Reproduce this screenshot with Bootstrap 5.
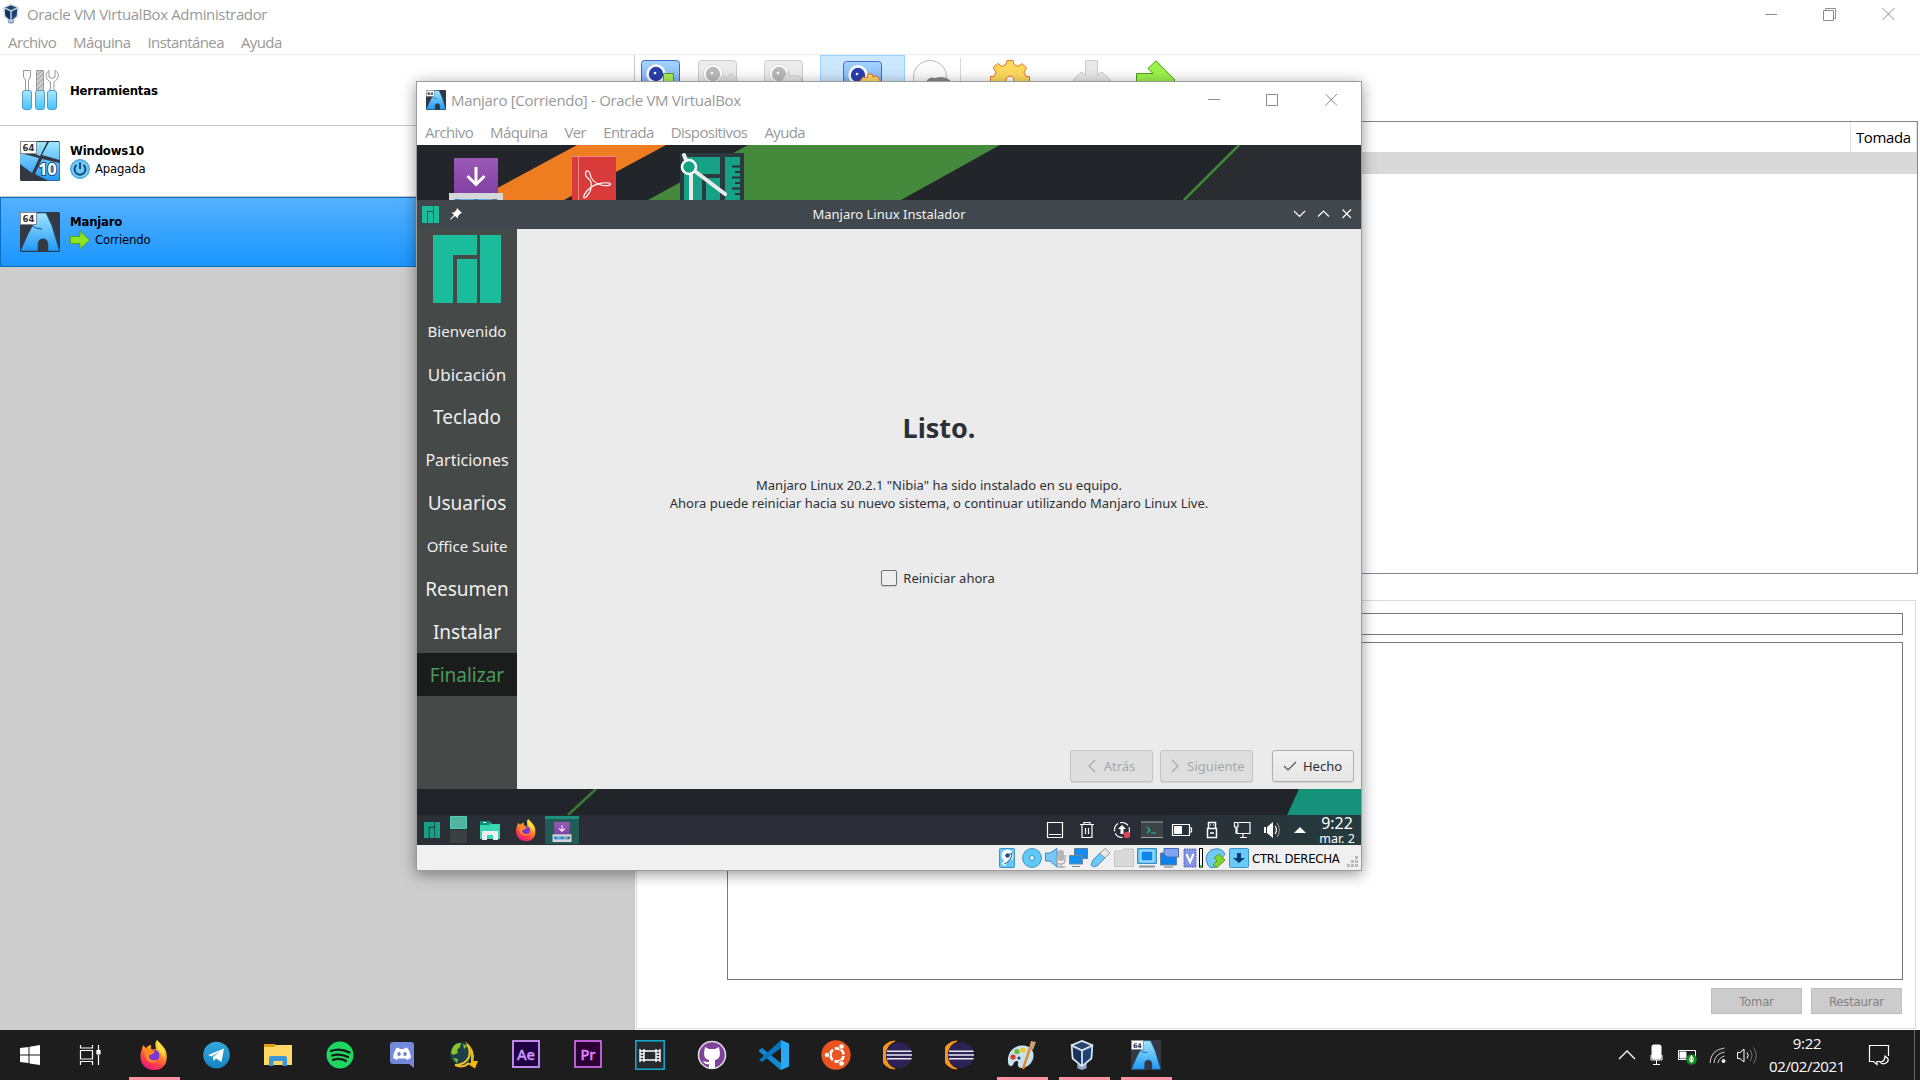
<!DOCTYPE html>
<html lang="es">
<head>
<meta charset="utf-8">
<title>Oracle VM VirtualBox Administrador</title>
<link href="https://cdn.jsdelivr.net/npm/bootstrap@5.3.0/dist/css/bootstrap.min.css" rel="stylesheet">
<style>
html,body{width:1920px;height:1080px;overflow:hidden}
body{font-family:"Open Sans","Noto Sans",sans-serif;font-size:15px;line-height:20px;color:#000;background:#fff}
svg{display:block;flex:none;overflow:visible}
.desk{width:1920px;height:1080px}
.fade-t{color:#999}
.ttl{height:30px;padding:0 0 2px 2px}
.ttl .cap{margin-left:7px;letter-spacing:-.36px}
.mnu{height:24px;padding-left:8px;gap:17px;letter-spacing:-.6px}
.mainrow{border-top:1px solid #ededed;height:976px}
.leftp{width:635px;background:#cdcdcd;border-right:1px solid #c4c4c4}
.tah{font-family:"DejaVu Sans Condensed","DejaVu Sans",sans-serif;font-stretch:condensed;font-size:13px;line-height:18px;letter-spacing:-.2px}
.entry{height:71px;padding-left:20px;gap:10px;background:#fff;border-bottom:1px solid #c8c8c8}
.entry.cur{height:70px;background:linear-gradient(#55b1ff,#1a96ff);border:1px solid #0a6fc4;padding:0 0 1px 19px}
.state{height:18px;margin-bottom:2px;gap:5px}
.tools{height:66px}
.hot{width:85px;height:66px;background:#cce8ff;border:1px solid #99d1ff;padding:5px 0 0 22px}
.snap{margin-right:2px;height:453px;border:1px solid #828790}
.snap .hd{height:30px}
.snap .tom{border-left:1px solid #e3e3e3;border-right:1px solid #e3e3e3;width:67px;padding-left:5px;letter-spacing:-.4px;line-height:31px}
.snap .sel{height:22px;background:#d9d9d9}
.det{margin:26px 4px 0 1px;height:429px;border:1px solid #dadada;padding:12px 12px 0 90px}
.fld{height:22px;border:1px solid #7a7a7a}
.area{height:338px;margin-top:7px;border:1px solid #7a7a7a}
.wbtn{width:91px;height:26px;background:#ccc;border:1px solid #bfbfbf;color:#838383;text-align:center;line-height:25px}
.vm{position:absolute;left:416px;top:81px;width:946px;height:790px;border:1px solid #9c9c9c;background:#fff;box-shadow:0 3px 14px rgba(0,0,0,.42)}
.noto{font-family:"Noto Sans",sans-serif}
.vmt{height:37px;padding:0 0 1px 9px}
.vmt .cap{margin-left:5px;letter-spacing:-.31px}
.vmm{height:26px;padding:0 0 1px 8px;gap:17px;letter-spacing:-.6px}
.inst{height:29px;background:#40474d;color:#f2f2f2;font-size:13px;padding-bottom:1px}
.side{width:100px;background:#454948;padding-top:6px;color:#efefef}
.step{height:43px;line-height:43px;text-align:center;white-space:nowrap}
.s1{font-size:15px;line-height:45px}.s2{font-size:17px;line-height:45px}.s2n{font-size:16px;line-height:45px}.s3{font-size:19px;line-height:44px}
.step.on{background:#1b1d1c;color:#4b9a5c}
.pane{background:#ebebeb;color:#2b3036;font-size:13px;line-height:18px}
.done{font-size:27px;line-height:36px;font-weight:700;margin-top:181px}
.box{width:16px;height:16px;border:1px solid #6f7376;border-radius:2px;background:#eee;box-shadow:0 1px 1px #ccc}
.kbtn{height:32px;border:1px solid #c5c5c5;border-radius:3px;background:#dedede;color:#a6a8a9;box-shadow:0 1px 1px #d0d0d0}
.kbtn.go{border-color:#afafaf;background:linear-gradient(#f0f0f0,#e6e6e6);color:#2b3036}
.gbar{height:30px;background:linear-gradient(90deg,#292f35,#2a2d37 20%,#2a2d36 75%,#263b3e)}
.task{width:34px;height:28px;background:#235b57;border-top:3px solid #1e8f7d}
.gclock{width:46px;height:30px;font-size:12.500px;line-height:13px;margin-left:3px}
.gclock div{font-size:16px;line-height:17px}
.stat{height:25px;background:#f0f0f0}
.tb{height:50px;background:#1d1d1d;color:#fff}
.ap{width:62px;height:50px;padding:0 5px}
.ap.run{border-bottom:3px solid #ff94a0;margin:0 5.5px;width:51px;padding:3px 0 0}
</style>
<script src="https://cdn.jsdelivr.net/npm/bootstrap@5.3.0/dist/js/bootstrap.bundle.min.js"></script>
</head>
<body>
<svg width="0" height="0" class="position-absolute">
<defs>
<linearGradient id="gb" x2="0" y2="1"><stop stop-color="#9fe6ff"/><stop offset="1" stop-color="#2299f5"/></linearGradient>
<linearGradient id="gc" x2="0" y2="1"><stop stop-color="#b4e4ff"/><stop offset="1" stop-color="#43c4fb"/></linearGradient>
<linearGradient id="gcam" x2="0" y2="1"><stop stop-color="#a4d4ff"/><stop offset="1" stop-color="#6c9df0"/></linearGradient>
<linearGradient id="gff" x1=".8" y1="0" x2=".3" y2="1"><stop stop-color="#fff04d"/><stop offset=".4" stop-color="#ff9a26"/><stop offset=".75" stop-color="#ff3d49"/><stop offset="1" stop-color="#e8148a"/></linearGradient>
<linearGradient id="gpu" x2="0" y2="1"><stop stop-color="#9b59b6"/><stop offset="1" stop-color="#8140a4"/></linearGradient>
<linearGradient id="gtg" x2="0" y2="1"><stop stop-color="#35a9e0"/><stop offset="1" stop-color="#1583c0"/></linearGradient>
<symbol id="vbox" viewBox="0 0 26 32"><path d="M13 0 25 5 24 20 18 25V30L13 32 8 30V25L2 20 1 5Z" fill="#8fa6c6"/><path d="M13 2 23 6 13 10 3 6Z" fill="#24466f"/><path d="M3 8 12 12V26L4 19Z" fill="#14335c"/><path d="M23 8 14 12V26L22 19Z" fill="#1d4273"/><path d="M13 1 24 5.500 13 11 2 5.500ZM13 11V28M2 6 3 20 13 28 23 20 24 6" fill="none" stroke="#e7eff8" stroke-width="1.300"/></symbol>
<symbol id="arch" viewBox="0 0 40 40"><rect width="40" height="40" rx="1.500" fill="#343843"/><path d="M17 1H26L32 14 39.500 39H28V32C28 25 18 25 18 32V39H.5L8 22 14 11Z" fill="url(#gb)" stroke="#1a4e83" stroke-width=".6"/><path d="M11 13Q15 17 22 17" stroke="#1a4e83" fill="none"/><rect x=".5" y=".5" width="16" height="12" fill="#fff" stroke="#888"/><text x="8.500" y="10" text-anchor="middle" font-family="DejaVu Sans" font-weight="700" font-size="8.500" fill="#333">64</text></symbol>
<symbol id="mj" viewBox="0 0 68 68"><path d="M0 0H44V20H20V68H0ZM24 24H44V68H24ZM47 0H68V68H47Z"/></symbol>
<symbol id="ff" viewBox="0 0 28 30"><path d="M17 0C20 3 23 6 25 9 28 14 29 30 14 30 2 30-1 19 1 12L3 5 6 8C8 6 9 5 11 5L11 9C14 10 15 9 16 9 15 5 15 2 17 0Z" fill="url(#gff)"/><circle cx="13.500" cy="15.500" r="6" fill="#7a35d8"/><path d="M5 9C8 7 11 8 15 12 12 14 12 15 9 15 8 20 14 22 18 19 14 26 3 23 5 9Z" fill="#ff8a22"/><path d="M18 2C21 7 26 10 25 19 24 14 19 12 17 8Z" fill="#fff04d" opacity=".7"/></symbol>
<symbol id="inst" viewBox="0 0 54 57"><path d="M5 0H49V36H5Z" fill="url(#gpu)"/><path d="M27 9V26M18.500 18 27 26.500 35.500 18" fill="none" stroke="#fff" stroke-width="3"/><path d="M0 35H54V57H0Z" fill="#d4d6d8"/><rect x="4" y="41" width="46" height="9" rx="4" fill="#69a9d5"/><circle cx="8" cy="45" r="4" fill="#1d86db"/><circle cx="27" cy="45" r="4" fill="#1d86db"/><circle cx="46" cy="45" r="4" fill="#666"/></symbol>
<symbol id="camb" viewBox="0 0 40 34"><rect x=".5" y=".5" width="38" height="38" rx="3" fill="url(#gcam)" stroke="#4668cf"/><circle cx="15" cy="14" r="9.700" fill="#fff"/><circle cx="15" cy="14" r="7.200" fill="#2b3fae"/><circle cx="14" cy="13" r="1.300" fill="#fff"/></symbol>
<symbol id="camg" viewBox="0 0 40 34"><rect x=".5" y=".5" width="38" height="38" rx="3" fill="#ececec" stroke="#ccc"/><circle cx="15" cy="14" r="9.700" fill="#fff" stroke="#ddd"/><circle cx="15" cy="14" r="7.200" fill="#bbb"/><circle cx="14" cy="13" r="1.300" fill="#fff"/></symbol>
<symbol id="ecl" viewBox="0 0 30 30"><path d="M12 1A14 14 0 0 0 12 29 15 15 0 0 1 12 1Z" fill="#f7941e" stroke="#f7941e"/><circle cx="16" cy="15" r="13" fill="#2c2255"/><path d="M4 11.300H28.500M3.500 15H29M4 18.700H28.500" stroke="#e9e7f2" stroke-width="1.600"/></symbol>
</defs></svg>

<div class="desk d-flex flex-column">
  <div class="ttl d-flex align-items-center fade-t">
    <svg width="18" height="20"><use href="#vbox"/></svg>
    <span class="cap">Oracle VM VirtualBox Administrador</span>
    <svg class="ms-auto" style="margin-right:25px" width="130" height="14" fill="none" stroke="#8c8c8c"><path d="M0 7.500H12M58.500 3.500H68.500V13.500H58.500ZM60.500 3V1.500H70.500V11.500H69M117.500 1 129.500 13M129.500 1 117.500 13"/></svg>
  </div>
  <div class="mnu d-flex align-items-center fade-t"><span>Archivo</span><span>Máquina</span><span>Instantánea</span><span>Ayuda</span></div>
  <div class="mainrow d-flex">
    <div class="leftp flex-shrink-0">
      <div class="entry d-flex align-items-center">
        <svg width="40" height="40" viewBox="0 0 40 40"><g fill="#fff" stroke="#999"><path d="M3.500.5H10.500V7L8.500 10V21H5.500V10L3.500 7Z"/><path d="M16.500.5H23.500V21H16.500Z" fill="#ccc"/><path d="M29 .5V7L32 8.500 35 7V.5C40 3 39 9 34 12V21H30.500V12C25 9 25 3 29 .5Z"/></g><path d="M17 5 22 1M17 10 23 4M17 15 23 9M17 20 23 14" stroke="#888" stroke-width=".7"/><g fill="url(#gc)" stroke="#4b9ccc"><rect x="2.500" y="20.500" width="9" height="19" rx="2.500"/><rect x="15.500" y="20.500" width="9" height="19" rx="2.500"/><rect x="27.500" y="20.500" width="9" height="19" rx="2.500"/></g></svg>
        <b class="tah" style="padding-top:2px">Herramientas</b>
      </div>
      <div class="entry d-flex align-items-center">
        <svg width="40" height="40" viewBox="0 0 40 40"><rect width="40" height="40" rx="1.500" fill="#343843"/><path d="M14 1H27L20 15 10 11ZM29 1H39.500V19L22 14ZM0 12 19 17 12 32 0 23ZM22 18 39.500 22V39.500H28L15 33Z" fill="url(#gb)"/><rect x=".5" y=".5" width="16" height="12" fill="#fff" stroke="#888"/><text x="8.500" y="10" text-anchor="middle" font-family="DejaVu Sans" font-weight="700" font-size="8.500" fill="#333">64</text><text x="27.500" y="34" text-anchor="middle" font-family="Noto Sans" font-weight="700" font-size="16" fill="#fff" stroke="#234a80" stroke-width="2" paint-order="stroke">10</text></svg>
        <div class="tah"><b>Windows10</b><div class="state d-flex align-items-center"><svg width="20" height="20"><circle cx="10" cy="10" r="9.400" fill="#6cc9fb" stroke="#3b8fca"/><path d="M6.500 6A5.500 5.500 0 1 0 13.500 6M10 3.500V10" fill="none" stroke="#123f6d" stroke-width="1.800"/></svg>Apagada</div></div>
      </div>
      <div class="entry cur d-flex align-items-center">
        <svg width="40" height="40"><use href="#arch"/></svg>
        <div class="tah"><b>Manjaro</b><div class="state d-flex align-items-center"><svg width="20" height="20"><path d="M.5 6.500H10V1L19.500 10 10 19V13.500H.5Z" fill="#8de723" stroke="#57a022"/></svg>Corriendo</div></div>
      </div>
    </div>
    <div class="flex-grow-1 d-flex flex-column">
      <div class="tools d-flex align-items-start">
        <svg width="40" height="34" style="margin:5px 0 0 6px"><use href="#camb"/><path d="M22.500 13.500H32.500V34H22.500Z" fill="#a6ef5b" stroke="#4ca01e"/></svg>
        <svg width="40" height="34" style="margin:5px 0 0 17px"><use href="#camg"/><path d="M19 23 25 15 29 18 33 13 39 19V30H19Z" fill="#e4e4e4" stroke="#ccc"/></svg>
        <svg width="40" height="34" style="margin:5px 0 0 26px"><use href="#camg"/><path d="M18 20 25 11V16H35L38 20V30H18Z" fill="#e8e8e8" stroke="#ccc"/></svg>
        <div class="hot" style="margin-left:16px"><svg width="40" height="34"><use href="#camb"/><path d="M16 21 20 16 24 17 25 13H29L30 16 34 15 37 19V34H16Z" fill="#ffd965" stroke="#ee6b2f"/></svg></div>
        <svg width="40" height="40" style="margin:5px 0 0 8px"><circle cx="17" cy="17" r="16.500" fill="#fcfcfc" stroke="#bbb"/><path d="M13 22Q16 16 22 18 30 15 37 20V30H13Z" fill="#888"/></svg>
        <svg width="1" height="40" style="margin:3px 0 0 7px"><path d="M.5 0V40" stroke="#d8d8d8"/></svg>
        <svg width="40" height="40" style="margin:5px 0 0 29px"><path d="M.5 16.500H4L6 12 3 8 8 3.500 12 6.500 16 4.500 17 .5H23L24 4.500 28 6.500 32 3.500 36.500 8 34 12 36 16.500H39.500V24H.5ZM20 16A4 4 0 1 0 20.100 16Z" fill="#ffd95d" stroke="#ea722a" fill-rule="evenodd"/></svg>
        <svg width="40" height="40" style="margin:5px 0 0 42px"><path d="M13.500.5H25.500V15L30 12 38.500 20 20 38 1 20 9 12 13.500 15Z" fill="#e8e8e8" stroke="#ccc"/></svg>
        <svg width="40" height="40" style="margin:5px 0 0 24px"><path d="M.5 13.500H17L12 8.500 20 .8 39 20 20 39 12 31H.5Z" fill="#9cf34a" stroke="#4f9a17"/></svg>
      </div>
      <div class="snap"><div class="hd d-flex justify-content-end"><div class="tom">Tomada</div></div><div class="sel"></div></div>
      <div class="det"><div class="fld"></div><div class="area"></div>
        <div class="d-flex justify-content-end mt-2 tah" style="gap:9px;margin-right:1px"><div class="wbtn">Tomar</div><div class="wbtn">Restaurar</div></div>
      </div>
    </div>
  </div>

  <div class="tb d-flex align-items-center">
    <div class="ap d-flex align-items-center justify-content-center" style="width:60px"><svg width="20" height="20" fill="#fff"><path d="M0 3 8.500 2V9.500H0ZM9.500 1.800 20 0V9.500H9.500ZM0 10.500H8.500V18L0 17ZM9.500 10.500H20V20L9.500 18.500Z"/></svg></div>
    <div class="ap d-flex align-items-center" style="width:63px;padding-left:20px"><svg width="20" height="20" fill="none" stroke="#fff" stroke-width="1.200"><path d="M.5 0V3H12.500V0M.5 20V16.500H12.500V20M.5 5.500H12.500V14H.5ZM18.500 0V5M18.500 10V20"/><path d="M17 5.500H20V9H17Z" fill="#fff"/></svg></div>
    <div class="ap run d-flex align-items-center justify-content-center"><svg width="28" height="30"><use href="#ff"/></svg></div>
    <div class="ap d-flex align-items-center justify-content-center"><svg width="27" height="28"><circle cx="13.500" cy="14" r="13.300" fill="url(#gtg)"/><path d="M5 14 21 7.500 18.500 21 13 17.500 10.500 20 10 16 17 10.500 8.500 15.500Z" fill="#fff"/></svg></div>
    <div class="ap d-flex align-items-center justify-content-center"><svg width="28" height="24"><path d="M0 1H11L13 3V6H0Z" fill="#e09b0e"/><path d="M0 4H10L12 2H28V22H0Z" fill="#ffd767"/><path d="M5 23V15Q5 13 7 13H21Q23 13 23 15V23H18.500V18H9.500V23Z" fill="#3c96d9"/></svg></div>
    <div class="ap d-flex align-items-center justify-content-center"><svg width="28" height="28"><circle cx="14" cy="14" r="13.500" fill="#1ed760"/><path d="M5 10Q14 6.500 23.500 11.500M6 14.500Q14 12 22 16M7 18.800Q14 16.500 20 20" fill="none" stroke="#191919" stroke-width="2.300" stroke-linecap="round"/></svg></div>
    <div class="ap d-flex align-items-center justify-content-center"><svg width="24" height="26"><path d="M3 0H21Q24 0 24 3V26L19 22H3Q0 22 0 19V3Q0 0 3 0Z" fill="#7289da"/><path d="M8 5.500 6 6.500Q3 11 3 16L7 18 8 16.500H16L17 18 21 16Q21 11 18 6.500L15 5.500 14 7H10Z" fill="#fff"/><ellipse cx="9" cy="12" rx="1.700" ry="2" fill="#6b80cb"/><ellipse cx="15" cy="12" rx="1.700" ry="2" fill="#6b80cb"/></svg></div>
    <div class="ap d-flex align-items-center justify-content-center"><svg width="28" height="28"><circle cx="11.500" cy="12.500" r="11.500" fill="#1a4048"/><path d="M2 8Q5 1 11 2L10 6 7 9 8 12 3 14 1 12ZM13 3 17 5 14 8ZM3 17 8 18 7 22Z" fill="#8cc32c"/><path d="M15 0Q26 9 23.500 20L28 20 25 27.500 18 23 21 21.500Q22 10 15 0Z" fill="#f2b90d"/><path d="M5 24Q15 24 19 16 21 9 17 3M5 24Q12 28 19 22" fill="none" stroke="#f0c02a" stroke-width="2"/></svg></div>
    <div class="ap d-flex align-items-center justify-content-center"><svg width="28" height="28" style="margin-top:-3px"><rect x="1" y="1" width="26" height="26" fill="#1f0040" stroke="#cf96fd" stroke-width="1.800"/><text x="14" y="19.500" text-anchor="middle" font-family="Noto Sans" font-size="15" font-weight="500" fill="#cf96fd" stroke="#cf96fd" stroke-width=".4" textLength="18" lengthAdjust="spacingAndGlyphs">Ae</text></svg></div>
    <div class="ap d-flex align-items-center justify-content-center"><svg width="28" height="28" style="margin-top:-3px"><rect x="1" y="1" width="26" height="26" fill="#2a0034" stroke="#e070ff" stroke-width="1.600"/><text x="14" y="19.500" text-anchor="middle" font-family="Noto Sans" font-size="15" font-weight="500" fill="#e583fb" stroke="#e583fb" stroke-width=".4" textLength="15" lengthAdjust="spacingAndGlyphs">Pr</text></svg></div>
    <div class="ap d-flex align-items-center justify-content-center"><svg width="30" height="30"><rect x=".8" y=".8" width="28.400" height="28.400" fill="#272a2d" stroke="#13abd5" stroke-width="1.500"/><g fill="none" stroke="#fff" stroke-width="1.400"><path d="M5 9V22M9 9V22M21 9V22M25 9V22M9 11H21M9 20H21M5 11H9M5 14H9M5 17H9M5 20H9M21 11H25M21 14H25M21 17H25M21 20H25"/></g></svg></div>
    <div class="ap d-flex align-items-center justify-content-center"><svg width="30" height="30"><circle cx="15" cy="15" r="13.500" fill="#80409d" stroke="#ddd" stroke-width="1.600"/><path d="M8 7 12 9H18L22 7 23 13Q23 19 18 20V28H12V24Q8 25 6 21 9 22 12 22V20Q7 19 7 13Z" fill="#fff"/></svg></div>
    <div class="ap d-flex align-items-center justify-content-center"><svg width="30" height="30"><path d="M0 10 3 8 22 23V30L19 28 0 11.500Z" fill="#1287d4"/><path d="M0 20 22 0V8L3 22Z" fill="#0a73bd"/><path d="M22 0 30 3.500V26.500L22 30Z" fill="#29a8f2"/></svg></div>
    <div class="ap d-flex align-items-center justify-content-center"><svg width="30" height="30"><circle cx="15" cy="15" r="14.700" fill="#e95420"/><circle cx="16" cy="15" r="6.600" fill="none" stroke="#fff" stroke-width="2.700" stroke-dasharray="11.820 2" stroke-dashoffset="-1"/><g fill="#fff" stroke="#e95420"><circle cx="6" cy="15" r="2.800"/><circle cx="20.500" cy="6.500" r="2.800"/><circle cx="20.500" cy="23.500" r="2.800"/></g></svg></div>
    <div class="ap d-flex align-items-center justify-content-center"><svg width="30" height="30"><use href="#ecl"/></svg></div>
    <div class="ap d-flex align-items-center justify-content-center"><svg width="30" height="30"><use href="#ecl"/></svg></div>
    <div class="ap run d-flex align-items-center justify-content-center"><svg width="30" height="30"><path d="M1 22C0 10 10 4 19 6 28 8 29 19 22 25 17 29 10 29 11 24 12 19 7 21 6 25 4 27 1 26 1 22Z" fill="#c5e2f1"/><circle cx="6" cy="17" r="2.600" fill="#e0382c"/><circle cx="10" cy="11.500" r="2.600" fill="#6cbb2f"/><circle cx="16" cy="10" r="2.600" fill="#f3c722"/><circle cx="12" cy="18" r="1.600" fill="#345"/><path d="M16 29 23 8" stroke="#dc8a2a" stroke-width="2.400"/><path d="M22 8 24 1 29 2 26 10Z" fill="#c99f6c"/></svg></div>
    <div class="ap run d-flex align-items-center justify-content-center"><svg width="26" height="30" style="margin-right:4px"><use href="#vbox"/></svg></div>
    <div class="ap run d-flex align-items-center justify-content-center"><svg width="30" height="30"><use href="#arch"/></svg></div>
    <div class="d-flex align-items-center ms-auto">
      <svg width="148" height="24" fill="none" stroke="#fff"><path d="M0 16 8 8 16 16" stroke-width="1.300"/><rect x="33" y="2" width="9" height="14" rx="1.500" fill="#fff"/><path d="M32 12V17H43V12M37.500 17V21M34 21.500H41"/><path d="M59.500 7.500H76.500V16.500H59.500Z"/><path d="M61 9H67V15H61Z" fill="#fff"/><circle cx="72.500" cy="16.500" r="5.300" fill="#0f8a1d" stroke="none"/><path d="M72.500 13Q69 17 72.500 19 76 17 72.500 13V20" stroke-width="1.100"/><g stroke="#ccc"><path d="M91 20Q91.500 7 105.500 5M95 20Q95.500 11 105.500 9M99 20Q99.500 15 105.500 13"/></g><circle cx="104.500" cy="18" r="1.500" fill="#fff"/><path d="M118.500 9.500H121L125 6V19L121 15.500H118.500ZM128 9.500Q130.500 12.500 128 15.500"/><path d="M131 7Q135 12.500 131 18M134.500 4.500Q140 12.500 134.500 20.500" stroke="#777"/></svg>
      <div class="text-center" style="width:80px;line-height:23px;margin-top:-1px;letter-spacing:-.35px">9:22<br>02/02/2021</div>
      <svg width="20" height="20" style="margin-left:22px" fill="none" stroke="#fff" stroke-width="1.200"><path d="M11 16.500H8V19.500L4.500 16.500H.5V.5H19.500V11"/><path d="M16 11Q22 15 17 18 13 20 11 17 16 17 16 11Z"/></svg>
      <div style="width:6px;height:50px;border-left:1px solid #666;margin-left:25px"></div>
    </div>
  </div>

  <section class="vm d-flex flex-column">
    <div class="vmt d-flex align-items-center fade-t">
      <svg width="20" height="20"><use href="#arch"/></svg><span class="cap">Manjaro [Corriendo] - Oracle VM VirtualBox</span>
      <svg class="ms-auto" style="margin-right:23px" width="130" height="14" fill="none" stroke="#8c8c8c"><path d="M0 6.500H12M58.500 1.500H69.500V12.500H58.500ZM117.500 1 129 12.500M129 1 117.500 12.500"/></svg>
    </div>
    <div class="vmm d-flex align-items-center fade-t"><span>Archivo</span><span>Máquina</span><span>Ver</span><span>Entrada</span><span>Dispositivos</span><span>Ayuda</span></div>
    <svg width="944" height="55" style="overflow:hidden"><rect width="944" height="55" fill="#222529"/><path d="M822 0H944V55H767Z" fill="#282b2f"/><path d="M160 0H249L147 55H58Z" fill="#ee7d22"/><path d="M331 0H583L484 55H231Z" fill="#458a3c"/><path d="M822 0 767 55" stroke="#3f8837" stroke-width="2.500"/>
      <svg x="32" y="13" width="54" height="57"><use href="#inst"/></svg>
      <path d="M155 11H199V55H155Z" fill="#d93a3a"/><path d="M155 11.500H199M161.500 12V55" stroke="#ef8a8a"/><path d="M169 31C167 25 172 24 173 29 174 34 177 38 184 40 192 42 196 39 192 38 186 37 178 39 173 43 166 49 165 55 169 52 173 48 175 42 174 37 173 34 170 33 169 31" fill="none" stroke="#fff" stroke-width="1.200"/>
      <path d="M263 8H327V60H263Z" fill="#2c3a40"/><path d="M267 12H303V29H285V55H267ZM289 33H303V55H289ZM308 12H323V55H308Z" fill="#16a085"/><path d="M323 21.500H315M323 27H318M323 32.500H315M323 38H318M323 43.500H315M323 49H318" stroke="#263238" stroke-width="2"/><path d="M274 28V58M279 27 308 49M269 15 267 10" fill="none" stroke="#e9ebeb" stroke-width="4" stroke-linecap="round"/><circle cx="272" cy="22" r="7" fill="#16a085" stroke="#fff" stroke-width="2.500"/>
    </svg>
    <div class="inst noto d-flex align-items-center">
      <svg width="17" height="17" fill="#1abc9c" style="margin-left:5px"><use href="#mj"/></svg>
      <svg width="12" height="12" style="margin-left:11px" fill="#fff"><path d="M7 0 12 5 10.500 5.500 8 8V10.500L5 8 .5 11.800 0 11.300 4 7 1.500 4.500H4L6.500 2Z"/></svg>
      <span class="flex-grow-1 text-center" style="padding-left:22px">Manjaro Linux Instalador</span>
      <svg width="58" height="10" style="margin-right:9px" fill="none" stroke="#fff" stroke-width="1.200"><path d="M0 2 5.500 7.500 11 2M24 7.500 29.500 2 35 7.500M48.500 .5 57 9M57 .5 48.500 9"/></svg>
    </div>
    <div class="d-flex noto" style="height:560px">
      <div class="side flex-shrink-0">
        <svg width="68" height="68" fill="#1abc9c" style="margin:0 16px 6px"><use href="#mj"/></svg>
        <div class="step s1">Bienvenido</div><div class="step s2">Ubicación</div><div class="step s3">Teclado</div><div class="step s2n">Particiones</div><div class="step s3">Usuarios</div><div class="step s1">Office Suite</div><div class="step s3">Resumen</div><div class="step s3">Instalar</div><div class="step s3 on">Finalizar</div>
      </div>
      <div class="pane flex-grow-1 d-flex flex-column align-items-center">
        <div class="done">Listo.</div>
        <div class="text-center" style="margin-top:30px">Manjaro Linux 20.2.1 "Nibia" ha sido instalado en su equipo.<br>Ahora puede reiniciar hacia su nuevo sistema, o continuar utilizando Manjaro Linux Live.</div>
        <div class="d-flex align-items-center" style="margin-top:57px;padding-right:2px;gap:6px"><span class="box"></span>Reiniciar ahora</div>
        <div class="d-flex mt-auto align-self-end" style="margin:0 7px 7px 0">
          <div class="kbtn d-flex align-items-center justify-content-center" style="width:83px;gap:8px"><svg width="8" height="12" fill="none" stroke="currentColor" stroke-width="1.200"><path d="M7 0 1 6 7 12"/></svg>Atrás</div>
          <div class="kbtn d-flex align-items-center justify-content-center" style="width:93px;margin-left:7px;gap:8px;padding-left:3px"><svg width="8" height="12" fill="none" stroke="currentColor" stroke-width="1.200"><path d="M1 0 7 6 1 12"/></svg>Siguiente</div>
          <div class="kbtn go d-flex align-items-center justify-content-center" style="width:82px;margin-left:19px;gap:7px"><svg width="12" height="10" fill="none" stroke="#555" stroke-width="1.200"><path d="M0 5 4 9 12 1"/></svg>Hecho</div>
        </div>
      </div>
    </div>
    <svg width="944" height="26" style="overflow:hidden"><rect width="944" height="26" fill="#212529"/><path d="M179 0 151 26" stroke="#3a7b33" stroke-width="2.500"/><path d="M882 0H944V26H870Z" fill="#16917a"/></svg>
    <div class="gbar noto d-flex align-items-center text-white">
      <svg width="16" height="16" fill="#16a085" style="margin-left:7px"><use href="#mj"/></svg>
      <svg width="17" height="28" style="margin-left:10px"><path d="M.5.5H16.500V12.500H.5Z" fill="#54b3a0" stroke="#4fd0b6"/><path d="M0 14H17V27H0Z" fill="#3b4143"/></svg>
      <svg width="20" height="20" style="margin-left:13px"><path d="M0 1H9L12 4H20V19H0Z" fill="#35d8b0"/><path d="M0 1H9L11 3 9 5H0Z" fill="#128f78"/><path d="M2 11H18V20H13V15H7V20H2Z" fill="#eee"/><path d="M3 2.500H6" stroke="#fff"/></svg>
      <svg width="22" height="22" style="margin-left:15px"><use href="#ff"/></svg>
      <div class="task d-flex align-items-center justify-content-center" style="margin-left:8px"><svg width="20" height="20"><use href="#inst"/></svg></div>
      <svg class="ms-auto" width="262" height="20" fill="none" stroke="#fff" stroke-width="1.200"><path d="M.5 2.500H15.500V17.500H.5ZM2 14.500H14"/><path d="M33 4.500H47M37 4V2.500H43V4M35 5V17.500H45V5M38.500 8V14M41.500 8V14"/><circle cx="75" cy="10" r="7.500" stroke-dasharray="9 2"/><path d="M75 5 71 9H73.500V14H76.500V9H79Z" fill="#fff" stroke="none"/><circle cx="80" cy="15" r="3.200" fill="#da4453" stroke="none"/><path d="M94 2H116V18H94Z" fill="#3c4446" stroke="none"/><path d="M94 2H116M94 17.500H116" stroke="#9da3a5"/><path d="M100 7 103 10 100 13M104 13H109" stroke="#1abc9c"/><path d="M125.500 4.500H142.500V15.500H125.500ZM142.500 8H144.500V12H142.500"/><path d="M127 6H135V14H127Z" fill="#fff" stroke="none"/><path d="M161.500 8V2.500H168.500V8M160.500 8.500H169.500V17.500H160.500ZM163 13H167" stroke-width="1.500"/><path d="M163 5H164M166 5H167"/><path d="M192 2.500H203V13.500H190V8M187.500 2.500H191V7H187.500ZM189 7V13.500M196 14V17M193 17.500H200"/><path d="M217 7H219V13H217ZM220 7 226 2V18L220 13Z" fill="#fff" stroke="none"/><path d="M228 6Q231 10 228 14"/><path d="M230 3Q235 10 230 17" stroke="#888"/><path d="M247 13 253 7 259 13Z" fill="#fff" stroke="none"/></svg>
      <div class="gclock text-center" style="margin-right:3px;padding-left:4px"><div>9:22</div>mar. 2</div>
    </div>
    <div class="stat d-flex align-items-center">
      <svg class="ms-auto" width="251" height="20" viewBox="0 0 251 20">
        <rect x=".5" y=".5" width="15" height="19" rx="1" fill="#61c8fa" stroke="#3e93c6"/><circle cx="8.500" cy="7.500" r="6" fill="#fff"/><path d="M9 11 4 17" stroke="#fff" stroke-width="4"/><path d="M8.500 7.500 13 5Q13 13 5 16" fill="none" stroke="#3a7fb5" stroke-width="1.200"/><circle cx="8.500" cy="7.500" r="2.200" fill="#174f86"/>
        <circle cx="33" cy="10" r="9.400" fill="#62cafb" stroke="#3b8fbd"/><circle cx="33" cy="10" r="2.500" fill="#e0f5ff" stroke="#418cb6"/>
        <path d="M46.500 5H51L58 .5V19L51 13H46.500Z" fill="#75cafb" stroke="#4387b7"/><rect x="59" y="2" width="6" height="11" rx="2.500" fill="#b5b5b5"/><path d="M57 8V14Q57 16 62 16 66 16 66 12V7M62 16V19M58 19H66" fill="none" stroke="#aaa" stroke-width="1.300"/>
        <path d="M75.500.5H88.500V10.500H75.500Z" fill="#148df0" stroke="#5e7e9c"/><path d="M70.500 7.500H83.500V16H70.500ZM73 18.500H81" fill="#1492f2" stroke="#70879a"/>
        <path d="M94 12 101 5 106 10 98 18Q94 20 92 17Z" fill="#6bc8fa" stroke="#4389ba"/><path d="M101 5 106 .5 111 5 106 10Z" fill="#e8e8e8" stroke="#999"/>
        <path d="M115.500 3H122L124 1H134.500V18.500H115.500Z" fill="#d9d9d9" stroke="#c4c4c4"/>
        <path d="M138.500.5H157.500V15.500H138.500Z" fill="#5cc6fa" stroke="#418cba"/><rect x="142" y="3" width="12" height="10" fill="#0b85ea" stroke="#e3f6ff"/><path d="M140 18.500H156" stroke="#8896a0" stroke-width="2"/>
        <path d="M161.500 5H177.500V17H161.500ZM165 19H174" fill="#0b83ec" stroke="#6b7d8f"/><path d="M165 .5H179.500V9H168L165 6Z" fill="#80a5ee" stroke="#4c66bf"/>
        <rect x="185" y="1" width="12" height="18" fill="#8296e5" stroke="#4a59b2" stroke-dasharray="1.500 1"/><path d="M187.500 6 191 14 194.500 6" fill="none" stroke="#fff" stroke-width="2"/><rect x="200.500" y=".5" width="3" height="18.500" fill="#fff" stroke="#000"/><path d="M201 17H203V19H201Z" fill="#1ce21c"/>
        <path d="M209 17Q204 8 212 2 222-2 226 6L217 19Q211 21 209 17Z" fill="#6fcafa" stroke="#4389ba"/><path d="M215 10 220 6 226 12 218 19.500 214 17 218 13Z" fill="#7fd52b" stroke="#559b27"/>
        <rect x="230.500" y=".5" width="19" height="19" rx="1" fill="#69cafa" stroke="#3d93c5"/><path d="M238 5H242V10H246L240 15 234 10H238Z" fill="#063a75"/>
      </svg>
      <span class="tah" style="margin-left:2px;width:95px;padding-top:2px;letter-spacing:-.25px;white-space:nowrap">CTRL DERECHA</span>
      <svg width="11" height="11" style="margin-right:3px;margin-top:8px" fill="#bbb"><path d="M8 0H11V3H8ZM4 4H7V7H4ZM8 4H11V7H8ZM0 8H3V11H0ZM4 8H7V11H4ZM8 8H11V11H8Z"/></svg>
    </div>
  </section>
</div>
</body>
</html>
